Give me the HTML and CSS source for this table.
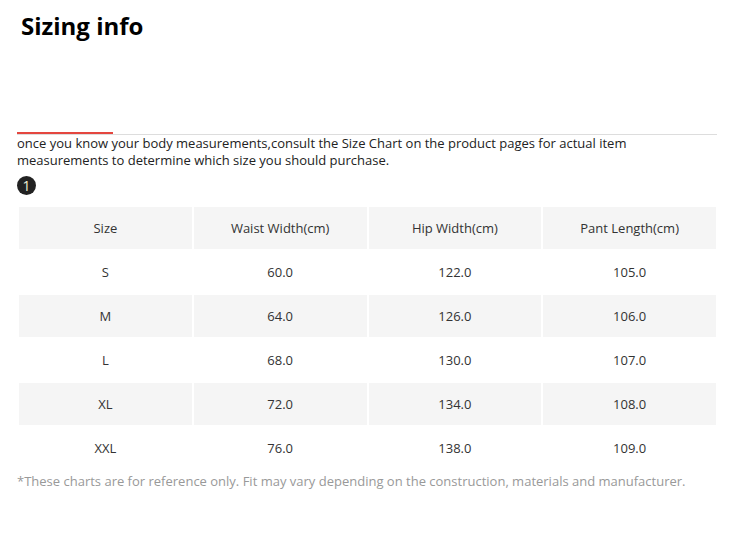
FILE: index.html
```html
<!DOCTYPE html>
<html>
<head>
<meta charset="utf-8">
<link rel="stylesheet" href="styles.css">
</head>
<body>
<div class="page">
  <h1 class="title">Sizing info</h1>
  <div class="tabs"><span class="tab-active"></span></div>
  <p class="intro">once you know your body measurements,consult the Size Chart on the product pages for actual item measurements to determine which size you should purchase.</p>
  <div class="step">1</div>
  <table class="chart">
    <tr class="shade"><td>Size</td><td>Waist Width(cm)</td><td>Hip Width(cm)</td><td>Pant Length(cm)</td></tr>
    <tr><td>S</td><td>60.0</td><td>122.0</td><td>105.0</td></tr>
    <tr class="shade"><td>M</td><td>64.0</td><td>126.0</td><td>106.0</td></tr>
    <tr><td>L</td><td>68.0</td><td>130.0</td><td>107.0</td></tr>
    <tr class="shade"><td>XL</td><td>72.0</td><td>134.0</td><td>108.0</td></tr>
    <tr><td>XXL</td><td>76.0</td><td>138.0</td><td>109.0</td></tr>
  </table>
  <p class="note">*These charts are for reference only. Fit may vary depending on the construction, materials and manufacturer.</p>
</div>
</body>
</html>
```
FILE: styles.css
```css
html, body {
  margin: 0;
  padding: 0;
  background: #fff;
}
.page {
  font-family: "Open Sans", "Liberation Sans", sans-serif;
  color: #333;
  padding: 0 17px;
  width: 700px;
}
.title {
  margin: 0;
  padding: 10px 0 0 4px;
  font-size: 24px;
  font-weight: 700;
  line-height: 32px;
  color: #000;
  height: 122px;
}
.tabs {
  position: relative;
  height: 2px;
  border-bottom: 1px solid #ddd;
}
.tab-active {
  position: absolute;
  left: 0;
  top: 0;
  width: 96px;
  height: 2px;
  background: #e4463f;
}
.intro {
  margin: 0;
  padding-top: 0;
  font-size: 13px;
  line-height: 17px;
  color: #222;
  width: 640px;
}
.step {
  margin-top: 7px;
  width: 19px;
  height: 19px;
  border-radius: 50%;
  background: #222;
  color: #f3f0d8;
  font-size: 14px;
  line-height: 19px;
  text-align: center;
}
.chart {
  margin: 10px 0 0 0;
  border-collapse: separate;
  border-spacing: 2px 2px;
  width: 701px;
  table-layout: fixed;
}
.chart td {
  height: 42px;
  padding: 0;
  text-align: center;
  font-size: 13px;
  color: #333;
}
.shade td {
  background: #f5f5f5;
}
.note {
  margin: 2px 0 0 0;
  font-size: 13px;
  line-height: 17px;
  color: #999;
}
```
